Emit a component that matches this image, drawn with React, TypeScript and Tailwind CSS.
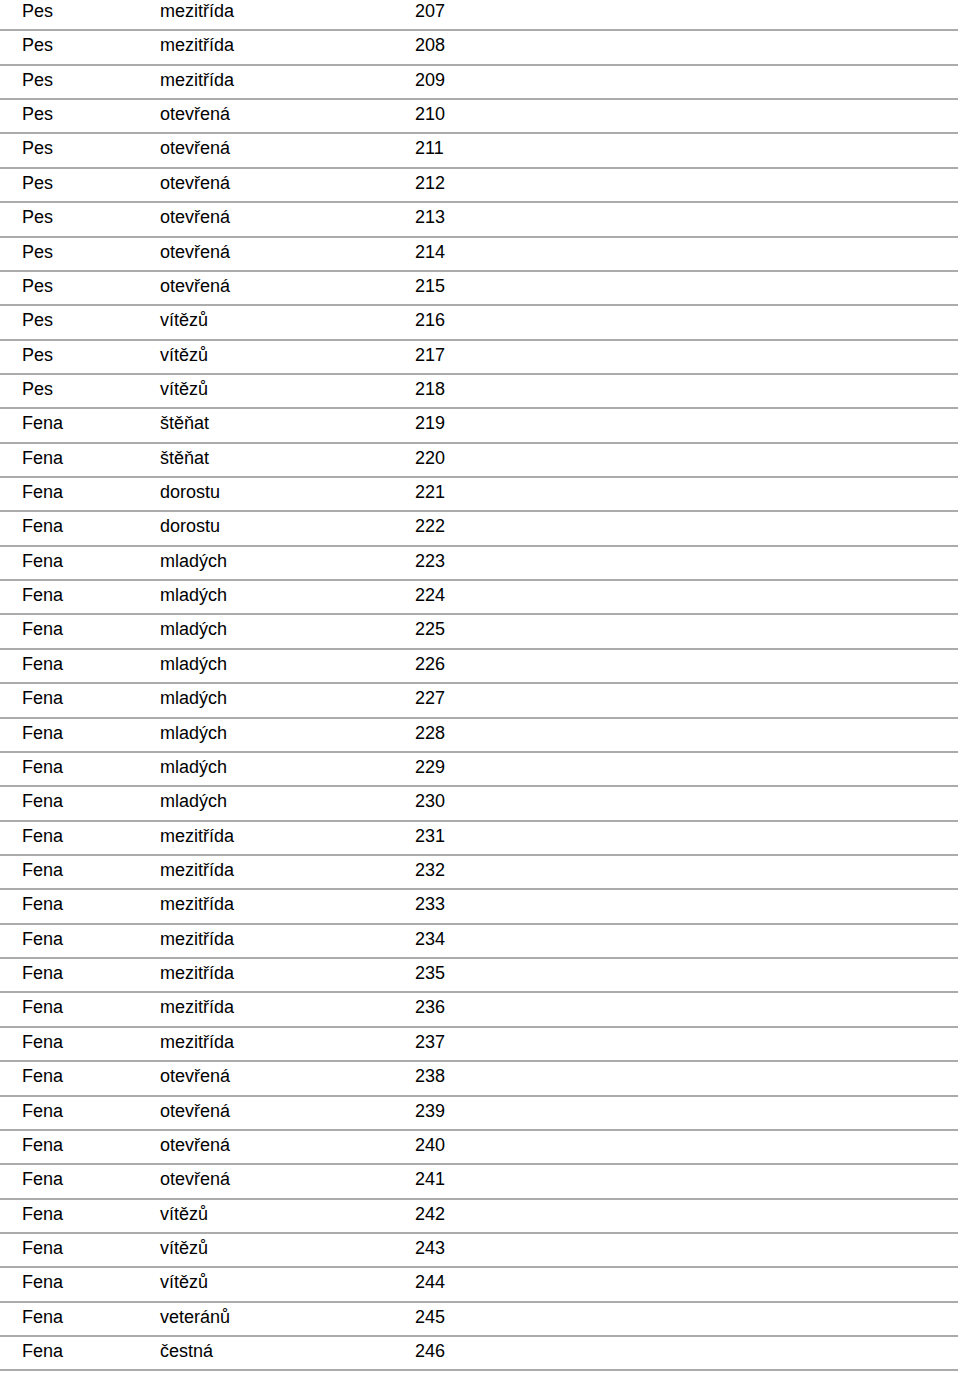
const rows: [string, string, number][] = [
  ["Pes", "mezitřída", 207],
  ["Pes", "mezitřída", 208],
  ["Pes", "mezitřída", 209],
  ["Pes", "otevřená", 210],
  ["Pes", "otevřená", 211],
  ["Pes", "otevřená", 212],
  ["Pes", "otevřená", 213],
  ["Pes", "otevřená", 214],
  ["Pes", "otevřená", 215],
  ["Pes", "vítězů", 216],
  ["Pes", "vítězů", 217],
  ["Pes", "vítězů", 218],
  ["Fena", "štěňat", 219],
  ["Fena", "štěňat", 220],
  ["Fena", "dorostu", 221],
  ["Fena", "dorostu", 222],
  ["Fena", "mladých", 223],
  ["Fena", "mladých", 224],
  ["Fena", "mladých", 225],
  ["Fena", "mladých", 226],
  ["Fena", "mladých", 227],
  ["Fena", "mladých", 228],
  ["Fena", "mladých", 229],
  ["Fena", "mladých", 230],
  ["Fena", "mezitřída", 231],
  ["Fena", "mezitřída", 232],
  ["Fena", "mezitřída", 233],
  ["Fena", "mezitřída", 234],
  ["Fena", "mezitřída", 235],
  ["Fena", "mezitřída", 236],
  ["Fena", "mezitřída", 237],
  ["Fena", "otevřená", 238],
  ["Fena", "otevřená", 239],
  ["Fena", "otevřená", 240],
  ["Fena", "otevřená", 241],
  ["Fena", "vítězů", 242],
  ["Fena", "vítězů", 243],
  ["Fena", "vítězů", 244],
  ["Fena", "veteránů", 245],
  ["Fena", "čestná", 246],
];

export default function App() {
  return (
    <div className="w-[960px] h-[1373px] overflow-hidden bg-white font-['Liberation_Sans',Arial,sans-serif] text-[18px] text-black">
      <div className="mt-[-3px] w-[958px]">
        {rows.map(([sex, cls, num]) => (
          <div
            key={num}
            className="h-[34.36px] flex items-start pt-[4px] leading-[20px] border-b-2 border-[#ababab]"
          >
            <span className="w-[160px] pl-[22px] shrink-0">{sex}</span>
            <span className="w-[255px] shrink-0">{cls}</span>
            <span>{num}</span>
          </div>
        ))}
      </div>
    </div>
  );
}
